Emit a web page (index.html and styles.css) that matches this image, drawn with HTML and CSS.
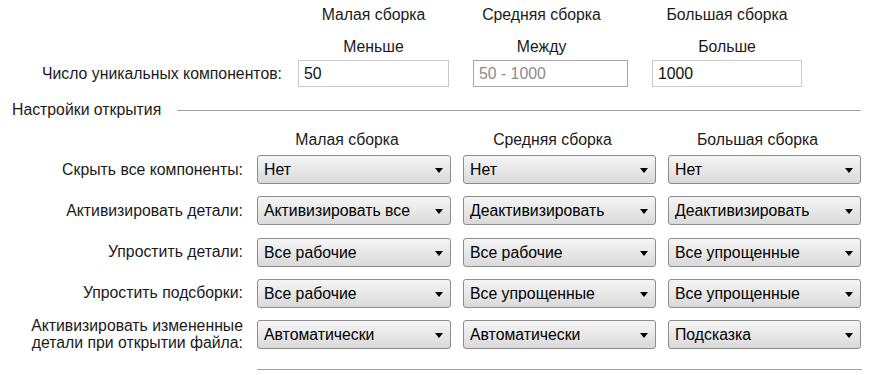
FILE: index.html
```html
<!DOCTYPE html>
<html lang="ru">
<head>
    <meta charset="UTF-8">
    <title>Настройки открытия сборок</title>
    <link rel="stylesheet" href="styles.css">
</head>
<body>
    <div class="page">
        <div class="size-grid">
            <div></div>
            <div class="col-title">Малая сборка</div>
            <div class="col-title mid">Средняя сборка</div>
            <div class="col-title">Большая сборка</div>

            <div></div>
            <div class="col-title">Меньше</div>
            <div class="col-title mid">Между</div>
            <div class="col-title">Больше</div>

            <div class="row-label">Число уникальных компонентов:</div>
            <div class="text-box">50</div>
            <div class="text-box disabled">50 - 1000</div>
            <div class="text-box">1000</div>
        </div>

        <div class="group-title">
            <span>Настройки открытия</span>
            <div class="rule"></div>
        </div>

        <div class="open-head">
            <div></div>
            <div class="col-title shift">Малая сборка</div>
            <div class="col-title shift">Средняя сборка</div>
            <div class="col-title shift">Большая сборка</div>
        </div>

        <div class="open-grid">
            <div class="row-label">Скрыть все компоненты:</div>
            <div class="combo">Нет</div>
            <div class="combo">Нет</div>
            <div class="combo">Нет</div>

            <div class="row-label">Активизировать детали:</div>
            <div class="combo">Активизировать все</div>
            <div class="combo">Деактивизировать</div>
            <div class="combo">Деактивизировать</div>

            <div class="row-label">Упростить детали:</div>
            <div class="combo">Все рабочие</div>
            <div class="combo">Все рабочие</div>
            <div class="combo">Все упрощенные</div>

            <div class="row-label">Упростить подсборки:</div>
            <div class="combo">Все рабочие</div>
            <div class="combo">Все упрощенные</div>
            <div class="combo">Все упрощенные</div>

            <div class="row-label two-line">Активизировать измененные<br>детали при открытии файла:</div>
            <div class="combo">Автоматически</div>
            <div class="combo">Автоматически</div>
            <div class="combo">Подсказка</div>
        </div>

        <div class="bottom-rule"></div>
    </div>
</body>
</html>
```

FILE: styles.css
```css
* {
    box-sizing: border-box;
    margin: 0;
    padding: 0;
}

body {
    background-color: #ffffff;
    color: #1a1a1a;
    font-family: "Liberation Sans", Arial, sans-serif;
    font-size: 15.8px;
    line-height: 18px;
}

.page {
    width: 877px;
    height: 375px;
    padding-top: 6px;
}

/* top block: sizes of assemblies */
.size-grid {
    display: grid;
    grid-template-columns: 274px 151px 155px 150px;
    grid-template-rows: 32px 22px 27px;
    column-gap: 24px;
}

.col-title {
    text-align: center;
    white-space: nowrap;
}

.col-title.mid {
    padding-right: 18px;
}

.row-label {
    text-align: right;
    align-self: center;
    white-space: nowrap;
}

.size-grid .row-label {
    margin-right: -8px;
}

.text-box {
    height: 27px;
    border: 1px solid #c9c9c9;
    background-color: #ffffff;
    padding: 0 5px;
    line-height: 25px;
    color: #111;
}

.text-box.disabled {
    border-color: #a8a8a8;
    color: #8c8c8c;
}

/* group box title with etched line */
.group-title {
    display: flex;
    align-items: center;
    margin-top: 14px;
    padding-left: 12px;
    padding-right: 16px;
}

.rule {
    flex: 1;
    height: 1px;
    margin-left: 16px;
    background-color: #a3a3a3;
}

/* open settings block */
.open-head,
.open-grid {
    display: grid;
    grid-template-columns: 245px 194px 193px 193px;
    column-gap: 12px;
}

.open-head {
    margin-top: 12px;
    margin-bottom: 6px;
}

.open-grid {
    grid-template-rows: repeat(5, 29px);
    row-gap: 12.25px;
}

.col-title.shift {
    padding-right: 14px;
}

.open-grid .row-label {
    padding-right: 2px;
}

.row-label.two-line {
    line-height: 17px;
    margin-top: -2px;
}

.combo {
    position: relative;
    height: 29px;
    border: 1px solid #8d8d8d;
    border-radius: 3px;
    background: linear-gradient(#f5f5f5, #e8e8e8 50%, #d9d9d9);
    padding-left: 6px;
    line-height: 27px;
    color: #000;
    white-space: nowrap;
}

.combo::after {
    content: "";
    position: absolute;
    right: 7px;
    top: 12px;
    border-left: 4.5px solid transparent;
    border-right: 4.5px solid transparent;
    border-top: 5px solid #000;
}

.bottom-rule {
    height: 1px;
    margin: 20px 15px 0 257px;
    background-color: #a3a3a3;
}
```
